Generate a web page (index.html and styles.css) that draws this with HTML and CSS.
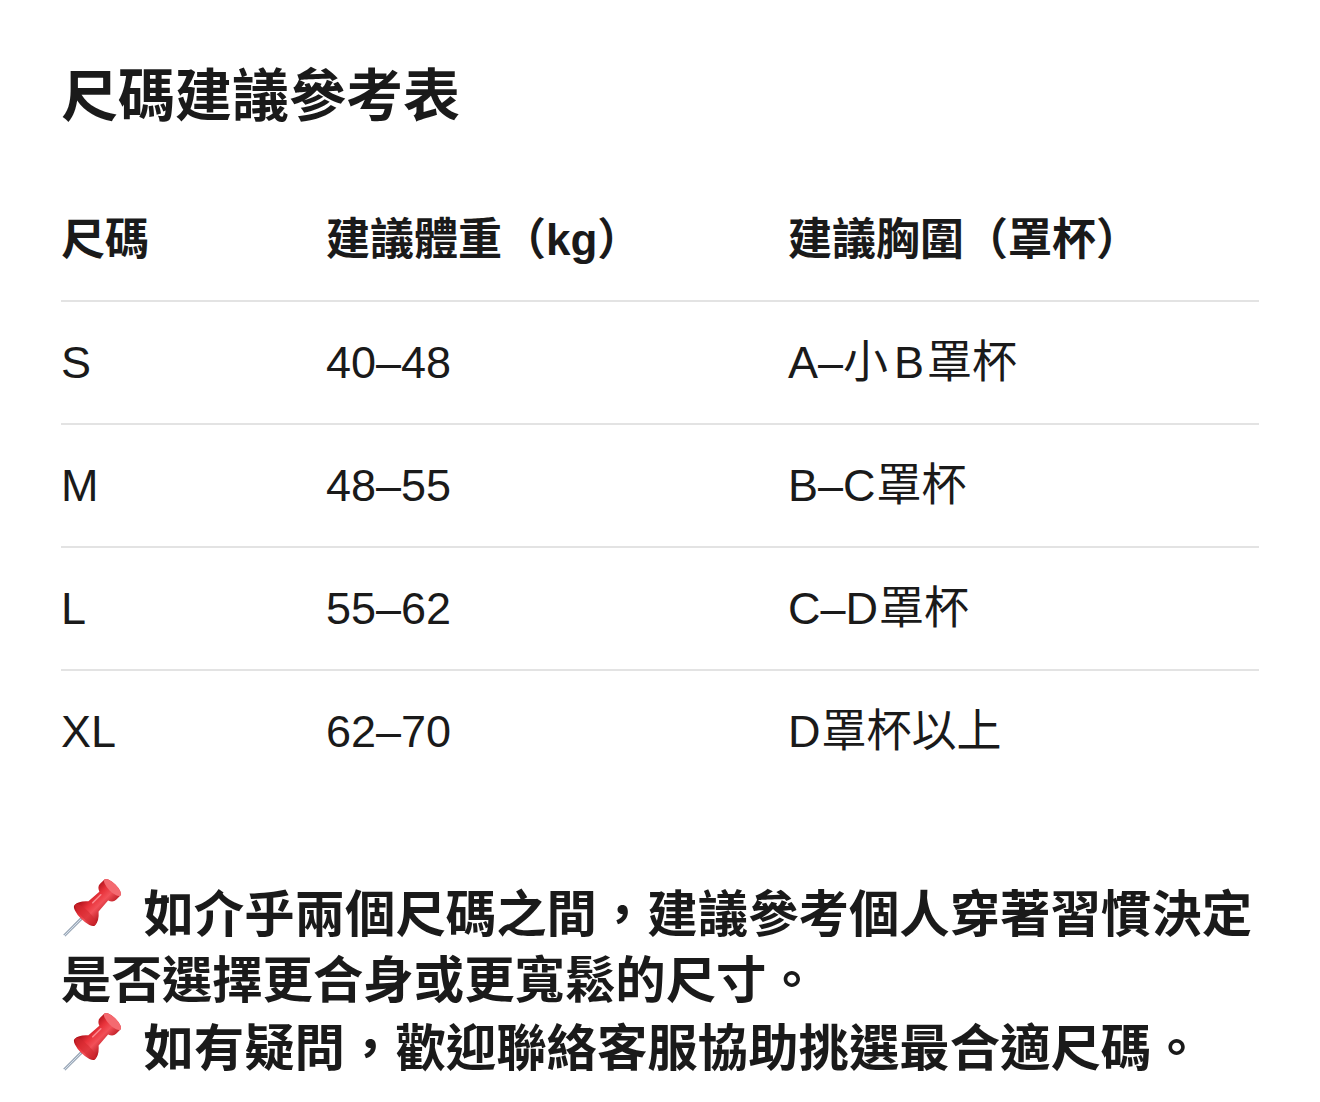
FILE: index.html
```html
<!DOCTYPE html>
<html lang="zh-Hant">
<head>
<meta charset="utf-8">
<title>尺碼建議參考表</title>
<link rel="stylesheet" href="styles.css">
</head>
<body>
<main class="page">
  <h1 class="title">尺碼建議參考表</h1>

  <div class="table">
    <div class="row head">
      <div class="cell">尺碼</div>
      <div class="cell">建議體重（kg）</div>
      <div class="cell">建議胸圍（罩杯）</div>
    </div>
    <div class="row">
      <div class="cell">S</div>
      <div class="cell">40–48</div>
      <div class="cell">A–小<span class="gap">B</span>罩杯</div>
    </div>
    <div class="row">
      <div class="cell">M</div>
      <div class="cell">48–55</div>
      <div class="cell">B–C<span class="gap-r"></span>罩杯</div>
    </div>
    <div class="row">
      <div class="cell">L</div>
      <div class="cell">55–62</div>
      <div class="cell">C–D<span class="gap-r"></span>罩杯</div>
    </div>
    <div class="row last">
      <div class="cell">XL</div>
      <div class="cell">62–70</div>
      <div class="cell">D<span class="gap-r"></span>罩杯以上</div>
    </div>
  </div>

  <div class="notes">
    <p class="note"><svg class="pin" viewBox="0 0 64 64" aria-hidden="true"><defs><linearGradient id="rb" x1="0" y1="0" x2="1" y2="0"><stop offset="0" stop-color="#a80f17"/><stop offset="0.35" stop-color="#e8323a"/><stop offset="0.6" stop-color="#f25058"/><stop offset="1" stop-color="#b3141c"/></linearGradient><linearGradient id="nd" x1="0" y1="0" x2="1" y2="0"><stop offset="0" stop-color="#5d6f86"/><stop offset="0.5" stop-color="#d9e2ec"/><stop offset="1" stop-color="#6c7d92"/></linearGradient></defs><g transform="translate(24 38) rotate(45)"><rect x="-1.3" y="0" width="2.6" height="28" fill="url(#nd)"/><path d="M-14 0 Q-14 -6 -7 -12 L-6 -26 Q-11 -28 -11 -32 L-11 -38 A11 4 0 0 1 11 -38 L11 -32 Q11 -28 6 -26 L7 -12 Q14 -6 14 0 A14 5 0 0 1 -14 0 Z" fill="url(#rb)"/><ellipse cx="0" cy="-38" rx="11" ry="4" fill="#f46a70"/><ellipse cx="0" cy="-1" rx="14" ry="4" fill="#d42a31" opacity="0.6"/><path d="M-3 -14 L-3 -25" stroke="#ff9aa0" stroke-width="1.6" stroke-linecap="round" opacity="0.8"/></g></svg> 如介乎兩個尺碼之間，建議參考個人穿著習慣決定是否選擇更合身或更寬鬆的尺寸。</p>
    <p class="note"><svg class="pin" viewBox="0 0 64 64" aria-hidden="true"><g transform="translate(24 38) rotate(45)"><rect x="-1.3" y="0" width="2.6" height="28" fill="url(#nd)"/><path d="M-14 0 Q-14 -6 -7 -12 L-6 -26 Q-11 -28 -11 -32 L-11 -38 A11 4 0 0 1 11 -38 L11 -32 Q11 -28 6 -26 L7 -12 Q14 -6 14 0 A14 5 0 0 1 -14 0 Z" fill="url(#rb)"/><ellipse cx="0" cy="-38" rx="11" ry="4" fill="#f46a70"/><ellipse cx="0" cy="-1" rx="14" ry="4" fill="#d42a31" opacity="0.6"/><path d="M-3 -14 L-3 -25" stroke="#ff9aa0" stroke-width="1.6" stroke-linecap="round" opacity="0.8"/></g></svg> 如有疑問，歡迎聯絡客服協助挑選最合適尺碼。</p>
  </div>
</main>
</body>
</html>
```

FILE: styles.css
```css
html, body {
  margin: 0;
  padding: 0;
  background: #ffffff;
}

body {
  font-family: "Liberation Sans", "Noto Sans CJK TC", sans-serif;
  color: #1a1a1a;
}

.page {
  padding: 55px 61px 0 61px;
}

.title {
  margin: 0;
  font-size: 57px;
  line-height: 73px;
  font-weight: 700;
  font-family: "Noto Sans CJK TC", sans-serif;
}

.table {
  margin-top: 51px;
  width: 1198px;
}

.row {
  display: grid;
  grid-template-columns: 265px 462px 1fr;
  border-bottom: 2px solid #e3e3e3;
}

.row.last {
  border-bottom: none;
}

.cell {
  padding: 30px 0;
  font-size: 45px;
  line-height: 61px;
  white-space: nowrap;
}

.head .cell {
  font-size: 44px;
  font-weight: 700;
}

.gap {
  margin: 0 3px 0 6px;
}

.gap-r {
  display: inline-block;
  width: 1px;
}

.notes {
  margin-top: 84px;
}

.note {
  margin: 0;
  font-family: "Noto Sans CJK TC", sans-serif;
  font-size: 50.4px;
  line-height: 66px;
  font-weight: 700;
}

.pin {
  width: 66px;
  height: 66px;
  margin-left: -1px;
  margin-right: 6px;
  vertical-align: -10px;
}
```
